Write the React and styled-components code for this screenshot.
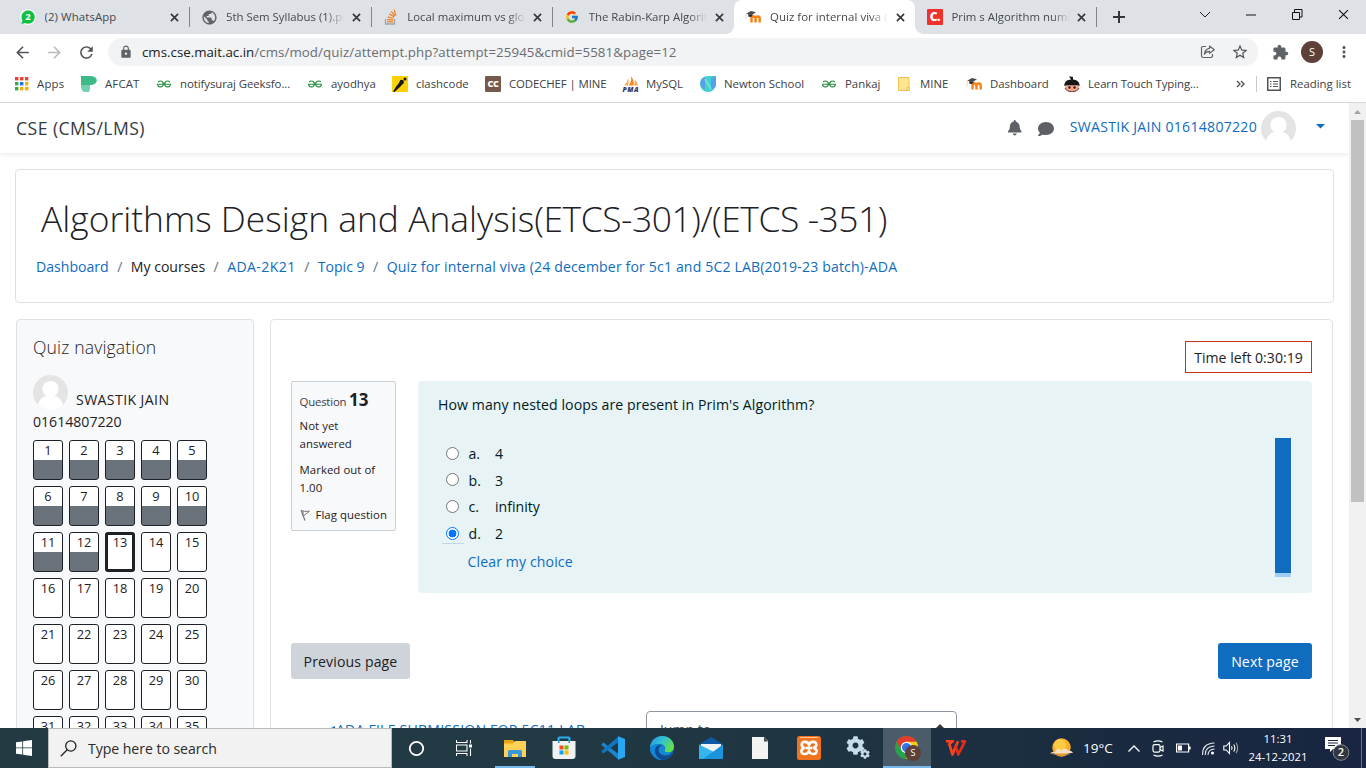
import React from "react";
import styled, { createGlobalStyle, css } from "styled-components";
import { MdArrowBack, MdArrowForward, MdRefresh, MdLock, MdStarBorder, MdExtension, MdMoreVert, MdPublic } from "react-icons/md";
import { FcGoogle } from "react-icons/fc";
import { SiGeeksforgeeks } from "react-icons/si";
import { FaBell, FaComment, FaCog } from "react-icons/fa";

const GlobalStyle = createGlobalStyle`
  * { box-sizing: border-box; }
  body { margin: 0; background: #fff; overflow: hidden; font-family: "Open Sans", "Noto Sans", sans-serif; color: #1d2125; }
  svg { display: block; flex: none; }
`;

const Screen = styled.div`
  width: 1366px;
  height: 768px;
  display: flex;
  flex-direction: column;
  overflow: hidden;
`;

/* ---------- browser chrome ---------- */
const TabStrip = styled.div`
  height: 34px;
  flex: none;
  background: #dee1e6;
  display: flex;
  padding-left: 8px;
`;
const Tab = styled.div`
  position: relative;
  width: 181.4px;
  height: 34px;
  padding: 0 6.5px 0 12px;
  display: flex;
  align-items: center;
  background: ${(p) => (p.$active ? "#fff" : "transparent")};
  border-radius: 8px 8px 0 0;
  ${(p) =>
    p.$active &&
    css`
      &::before, &::after {
        content: "";
        position: absolute;
        bottom: 0;
        width: 8px;
        height: 8px;
      }
      &::before { left: -8px; background: radial-gradient(circle at 0 0, transparent 7.5px, #fff 8px); }
      &::after { right: -8px; background: radial-gradient(circle at 100% 0, transparent 7.5px, #fff 8px); }
    `}
`;
const TabDivider = styled.i`
  position: absolute;
  right: -1px;
  top: 7px;
  width: 1px;
  height: 20px;
  background: #808387;
`;
const Favicon = styled.span`
  width: 16px;
  height: 16px;
  flex: none;
  display: flex;
  align-items: center;
  justify-content: center;
  overflow: visible;
`;
const TabTitle = styled.span`
  flex: 1;
  min-width: 0;
  margin: -1px 4px 0 8.5px;
  font-size: 11.4px;
  line-height: 18px;
  letter-spacing: ${(p) => p.$ls || 0}px;
  white-space: nowrap;
  overflow: hidden;
  color: #45494d;
  mask-image: ${(p) => (p.$fade ? "linear-gradient(90deg, #000 85%, transparent 100%)" : "none")};
`;
const TabClose = styled.span`
  width: 16px;
  display: flex;
  justify-content: center;
`;
const NewTab = styled.div`
  width: 46px;
  display: flex;
  align-items: center;
  justify-content: center;
`;
const WindowControls = styled.div`
  margin-left: auto;
  display: flex;
  height: 29px;
  align-items: center;
`;
const WindowButton = styled.span`
  width: 46px;
  display: flex;
  justify-content: center;
`;
const Toolbar = styled.div`
  height: 36px;
  flex: none;
  display: flex;
  align-items: center;
  padding: 0 0 0 6px;
  color: #5f6368;
`;
const ToolButton = styled.span`
  width: 32px;
  flex: none;
  display: flex;
  justify-content: center;
  color: ${(p) => p.$color || "#505357"};
`;
const Omnibox = styled.div`
  width: 1150px;
  flex: none;
  height: 28px;
  margin: 0 6px;
  padding: 0 2px 0 11px;
  border-radius: 14px;
  background: #f1f3f4;
  display: flex;
  align-items: center;
`;
const Url = styled.span`
  flex: 1;
  margin-left: 9px;
  font-size: 13.3px;
  line-height: 20px;
  letter-spacing: 0.08px;
  color: #6a6e73;
  b { font-weight: 400; color: #202124; letter-spacing: 0; }
`;
const ProfileBadge = styled.span`
  width: ${(p) => p.$size}px;
  height: ${(p) => p.$size}px;
  border-radius: 50%;
  background: #5d4037;
  color: #fff;
  font: ${(p) => p.$font}px/${(p) => p.$size}px "Open Sans", sans-serif;
  text-align: center;
`;
const BookmarkBar = styled.div`
  height: 33px;
  flex: none;
  border-bottom: 1px solid #d5d7da;
  display: flex;
  align-items: center;
  padding: 0 0 5px 13px;
`;
const Bookmark = styled.div`
  width: ${(p) => p.$w}px;
  flex: none;
  display: flex;
  align-items: center;
  gap: 8px;
  font-size: 11.4px;
  line-height: 18px;
  letter-spacing: ${(p) => p.$ls || 0}px;
  white-space: nowrap;
  color: #3c4043;
`;
const CodeBadge = styled.span`
  width: 16px;
  height: 16px;
  flex: none;
  background: ${(p) => p.$bg};
  color: #fff;
  font-weight: 800;
  font-size: ${(p) => p.$size}px;
  line-height: 15px;
  text-align: center;
  letter-spacing: -0.4px;
  border-radius: 1px;
`;
const BarDivider = styled.i`
  width: 1px;
  height: 16px;
  margin: 0 9px 0 11px;
  background: #c8cacd;
`;

/* ---------- page ---------- */
const Viewport = styled.div`
  height: 625px;
  flex: none;
  display: flex;
  overflow: hidden;
`;
const Page = styled.div`
  width: 1349px;
  height: 625px;
  overflow: hidden;
`;
const ScrollTrack = styled.div`
  width: 17px;
  background: #f1f1f1;
  display: flex;
  flex-direction: column;
  align-items: center;
`;
const ScrollArrow = styled.span`
  height: 17px;
  display: flex;
  align-items: center;
`;
const ScrollThumb = styled.div`
  width: 13px;
  height: 382px;
  background: #c1c1c1;
  margin-bottom: auto;
`;
const Navbar = styled.header`
  height: 50px;
  display: flex;
  align-items: center;
  padding: 0 24px 0 16px;
  background: #fff;
  box-shadow: 0 2px 4px rgba(0, 0, 0, 0.08);
`;
const Brand = styled.span`
  font-size: 17.6px;
  line-height: 24px;
  letter-spacing: 0.45px;
  color: #343a40;
`;
const NavTools = styled.div`
  margin-left: auto;
  display: flex;
  align-items: center;
  color: #5d6166;
`;
const NavIcon = styled.span`
  display: flex;
  margin: ${(p) => p.$top || 0}px 0 0 ${(p) => p.$left || 0}px;
`;
const UserLink = styled.a`
  color: #0f6cbf;
  font-size: 14.1px;
  line-height: 22px;
  letter-spacing: 0.26px;
  margin: -3px 4px 0 15.5px;
  white-space: nowrap;
`;
const Card = styled.section`
  border: 1px solid #dee2e6;
  border-radius: 4px;
  background: ${(p) => p.$bg || "#fff"};
`;
const HeaderCard = styled(Card)`
  width: 1319px;
  height: 134px;
  margin: 16px 0 16px 15px;
  padding: 21px 20px;
`;
const Title = styled.h1`
  margin: 0 0 0 5px;
  font-weight: 300;
  font-size: 35.4px;
  line-height: 55px;
  white-space: nowrap;
  span { letter-spacing: -0.44px; }
`;
const Breadcrumb = styled.nav`
  margin-top: 10px;
  display: flex;
  font-size: 14.1px;
  line-height: 22px;
  white-space: nowrap;
  i { font-style: normal; width: 22px; text-align: center; color: #6a737b; }
`;
const Crumb = styled.span`
  color: ${(p) => (p.$plain ? "inherit" : "#0f6cbf")};
  letter-spacing: ${(p) => p.$ls || 0}px;
`;
const Columns = styled.div`
  display: flex;
  align-items: flex-start;
  padding-left: 16px;
  gap: 16px;
`;
const NavCard = styled(Card)`
  width: 238px;
  height: 520px;
  padding: 16px;
`;
const NavHeading = styled.h5`
  margin: 0 0 16px;
  font-weight: 300;
  font-size: 17.6px;
  line-height: 23px;
  letter-spacing: 0.14px;
`;
const UserRow = styled.div`
  display: flex;
  align-items: flex-start;
  gap: 8px;
  height: 36px;
`;
const UserName = styled.div`
  font-size: 14.1px;
  line-height: 22px;
  letter-spacing: ${(p) => p.$ls || 0}px;
  margin-top: ${(p) => p.$top || 0}px;
`;
const QuestionGrid = styled.div`
  margin-top: 7px;
  display: grid;
  grid-template-columns: repeat(5, 30px);
  grid-auto-rows: 40px;
  gap: 6px;
`;
const QuestionButton = styled.a`
  border: ${(p) => (p.$current ? 3 : 1)}px solid #1d2125;
  border-radius: 3px;
  background: ${(p) => (p.$done ? "linear-gradient(#fff 0 19px, #6a737b 19px)" : "#fff")};
  text-align: center;
  font-size: 12.8px;
  line-height: ${(p) => (p.$current ? 14 : 18)}px;
`;
const Main = styled(Card)`
  width: 1063px;
  height: 520px;
  padding: 21px 20px;
  display: flex;
  flex-direction: column;
`;
const Timer = styled.div`
  align-self: flex-end;
  width: 127px;
  height: 32px;
  border: 1px solid #ca3120;
  text-align: center;
  font-size: 14.1px;
  line-height: 31px;
  white-space: nowrap;
`;
const QuestionRow = styled.div`
  display: flex;
  align-items: flex-start;
  justify-content: space-between;
  margin-top: 8px;
`;
const InfoBox = styled.div`
  width: 105px;
  height: 150px;
  border: 1px solid #cad0d7;
  border-radius: 2px;
  background: #f8f9fa;
  padding: 6px 0 0 7.5px;
  font-size: 11.4px;
  line-height: 18px;
  letter-spacing: 0.05px;
  white-space: nowrap;
`;
const InfoTitle = styled.div`
  height: 29px;
  line-height: 24px;
  letter-spacing: -0.2px;
  color: #3b4046;
  b { font-size: 17px; font-weight: 700; letter-spacing: 0; color: #1d2125; }
`;
const InfoText = styled.div`
  margin-bottom: ${(p) => p.$mb}px;
  display: flex;
  align-items: center;
  gap: 5px;
`;
const Formulation = styled.div`
  width: 894px;
  height: 212px;
  border-radius: 4px;
  background: #e7f3f5;
  color: #001a1e;
  padding: 13px 20px;
  font-size: 14.1px;
  display: flex;
  justify-content: space-between;
`;
const Prompt = styled.div`
  line-height: 22px;
  letter-spacing: 0.08px;
  margin-bottom: 25px;
`;
const Answer = styled.div`
  height: 26.6px;
  display: flex;
  align-items: center;
  padding-left: 4px;
  line-height: 22px;
`;
const RadioCell = styled.span`
  width: 22px;
  height: 20px;
  padding: 0 1px 1px 0;
  display: flex;
  align-items: center;
  justify-content: center;
  border-bottom: 1px solid ${(p) => (p.$focus ? "#bcd9ea" : "transparent")};
`;
const Radio = styled.span`
  width: 13px;
  height: 13px;
  border-radius: 50%;
  border: 1px solid ${(p) => (p.$on ? "#0075ff" : "#767676")};
  background: ${(p) => (p.$on ? "radial-gradient(circle, #0075ff 3.6px, #fff 4.2px)" : "#fff")};
`;
const Letter = styled.span`
  width: 31px;
  padding-left: 4.5px;
`;
const ClearLink = styled.a`
  display: block;
  margin: 4px 0 0 29.5px;
  line-height: 22px;
  letter-spacing: 0.12px;
  color: #0f6cbf;
`;
const SideMarker = styled.div`
  width: 16px;
  height: 139px;
  margin: 44px 1px 0 0;
  background: #0f6cbf;
  border-bottom: 4px solid #9fcdf8;
  box-shadow: 1px 0 #fafdfd;
`;
const PagerRow = styled.div`
  margin-top: 50px;
  display: flex;
  justify-content: space-between;
`;
const Button = styled.button`
  width: ${(p) => p.$w}px;
  height: 36px;
  padding: 1px 0 0;
  border: 0;
  border-radius: 3px;
  background: ${(p) => (p.$primary ? "#0f6cbf" : "#ced4da")};
  color: ${(p) => (p.$primary ? "#fff" : "#1d2125")};
  font: 14.1px/35px "Open Sans", sans-serif;
  letter-spacing: 0.12px;
`;
const ActivityNav = styled.div`
  margin-top: 32px;
  display: flex;
  padding-left: 36px;
`;
const ActivityLink = styled.a`
  width: 319px;
  height: 37px;
  color: #0f6cbf;
  font-size: 14.1px;
  line-height: 22px;
  letter-spacing: 0.2px;
  display: flex;
  align-items: center;
  gap: 1px;
  white-space: nowrap;
`;
const JumpSelect = styled.div`
  width: 311px;
  height: 36px;
  border: 1px solid #8f959e;
  border-radius: 4px;
  padding: 0 12px 0 13px;
  display: flex;
  align-items: center;
  justify-content: space-between;
  color: #495057;
  font-size: 14.1px;
`;

/* ---------- taskbar ---------- */
const Taskbar = styled.footer`
  height: 40px;
  flex: none;
  display: flex;
  background: linear-gradient(90deg, #223b43 0%, #213a43 38%, #1f3442 62%, #1a2b40 80%, #192541 100%);
  color: #fff;
`;
const TaskSlot = styled.div`
  width: ${(p) => p.$w || 49}px;
  flex: none;
  height: 40px;
  display: flex;
  align-items: center;
  justify-content: center;
  background: ${(p) => (p.$active ? "#4c5b68" : "transparent")};
  border-bottom: ${(p) => (p.$open ? "2px solid #76b9ed" : "0")};
  padding-top: ${(p) => (p.$open ? 2 : 0)}px;
`;
const InsetSlot = styled(TaskSlot)`
  margin: 0 4px 0 7px;
`;
const SearchBox = styled.div`
  width: 344px;
  flex: none;
  height: 40px;
  border: 1px solid #b9bcbe;
  background: #f2f2f2;
  color: #2b2b2b;
  display: flex;
  align-items: center;
  padding-left: 11px;
  gap: 11px;
  font-size: 14.1px;
  letter-spacing: -0.05px;
`;
const Tray = styled.div`
  margin-left: auto;
  display: flex;
  align-items: center;
  height: 40px;
`;
const Temperature = styled.span`
  width: 45px;
  margin-left: 10px;
  font-size: 13.5px;
`;
const TraySlot = styled.span`
  width: ${(p) => p.$w}px;
  padding-right: ${(p) => p.$pr || 0}px;
  display: flex;
  justify-content: center;
`;
const Clock = styled.div`
  width: 70px;
  margin-left: 7px;
  text-align: center;
  font-size: 11.3px;
  line-height: 18px;
  white-space: nowrap;
`;
const ShowDesktop = styled.i`
  width: 5px;
  height: 40px;
  border-left: 1px solid #6d7587;
`;
const ChromeStack = styled.span`
  position: relative;
  width: 24px;
  height: 24px;
`;
const BadgeHolder = styled.span`
  position: absolute;
  left: 10px;
  top: 9px;
  display: flex;
`;

/* ---------- icons ---------- */
const Cross = ({ size = 9, color = "#34373a", w = 1.8 }) => (
  <svg width={size} height={size} viewBox="0 0 10 10" stroke={color} strokeWidth={w} fill="none"><path d="M1 1l8 8M9 1l-8 8" /></svg>
);
const WhatsAppIcon = () => (
  <svg width="16" height="16" viewBox="0 0 16 16">
    <circle cx="8" cy="8" r="8" fill="#f4faf6" />
    <path d="M1.5 15l.9-3.6A6.6 6.6 0 1 1 5 13.9z" fill="#11bf42" />
    <text x="8" y="11.3" fontSize="9.5" fontWeight="700" fill="#fff" textAnchor="middle">2</text>
  </svg>
);
const StackIcon = () => (
  <svg width="16" height="16" viewBox="0 0 16 16" fill="none">
    <path d="M2.5 10v5h9v-5" stroke="#a0a5aa" strokeWidth="1.3" />
    <path d="M4 12.8h6.2M4.2 10.5l6 .7M4.7 7.8l5.8 1.7M6 4.8l5.2 3.1M8.2 2.4l3.9 4.7M11.2.8l1.600 5.600" stroke="#f48024" strokeWidth="1.3" />
  </svg>
);
const MoodleIcon = () => (
  <svg width="17" height="14" viewBox="0 0 17 14" fill="none">
    <path d="M6.500 12.500V8.600c0-2.800 4-2.800 4 0v3.900V8.600c0-2.800 4.200-2.800 4.200 0v3.900" stroke="#f98012" strokeWidth="2.400" />
    <path d="M1 3.700L6 1l5 1.200-4 2.600z" fill="#4a4a4a" />
    <path d="M3.300 4v2.800l2.800.2 2-2.200z" fill="#2d2d2d" />
    <path d="M1.300 4L.8 9" stroke="#d8c6b8" strokeWidth=".8" />
  </svg>
);
const AppsIcon = () => (
  <svg width="15" height="15" viewBox="0 0 15 15">
    {["#ea4335", "#ea4335", "#ea4335", "#34a853", "#1a73e8", "#fbab04", "#34a853", "#fbab04", "#fbab04"].map((c, i) => (
      <rect key={i} x={1 + (i % 3) * 5} y={1 + Math.floor(i / 3) * 5} width="3.400" height="3.400" fill={c} />
    ))}
  </svg>
);
const AfcatIcon = () => (
  <svg width="16" height="16" viewBox="0 0 16 16">
    <path d="M0 0h9c9 0 9 9 0 9H0z" fill="#3cba87" />
    <path d="M0 9h9v4l-1 3H4c-3 0-4-3-4-7z" fill="#74cfae" />
  </svg>
);
const ClashIcon = () => (
  <svg width="16" height="16" viewBox="0 0 16 16">
    <rect width="16" height="16" fill="#fcd207" />
    <path d="M1 15.500l3.500-5.500L8.500 5l3 2-3.500 4-5.500 5z" fill="#16181a" />
    <circle cx="9.700" cy="6" r="2.200" fill="#16181a" /><circle cx="13" cy="3" r="1.500" fill="#16181a" />
  </svg>
);
const PmaIcon = () => (
  <svg width="17" height="16" viewBox="0 0 17 16">
    <path d="M2 9.600C4 8 5.500 5 5.800 2.500 7 5 6.800 8 5.500 9.600z" fill="#f9a44a" />
    <path d="M6.500 9.600C9 6.500 9.500 3 9 .3c2.500 2.700 3.500 6.200 2.500 9.300z" fill="#f68a1f" />
    <path d="M12 9.600c1-2 1-4 .5-5.800 2 1.600 3.300 3.600 3.300 5.800z" fill="#f9a44a" />
    <text x=".5" y="15.800" fontSize="6.800" fontWeight="800" fontStyle="italic" fill="#35355f" textLength="16">PMA</text>
  </svg>
);
const NewtonIcon = () => (
  <svg width="16" height="16" viewBox="0 0 16 16">
    <path d="M16 0v8a8 8 0 1 1-8-8z" fill="#3fd0d0" />
    <path d="M5 3v10.500A8 8 0 0 1 .5 5.500C1.200 3 3 1.500 5 1zM11 13V2l5-2v8c0 3-2 5-5 5z" fill="#5b9fe8" />
    <path d="M5 3l6 10" stroke="#7ae3d8" strokeWidth="1.500" />
  </svg>
);
const FolderIcon = () => (
  <svg width="12" height="16" viewBox="0 0 12 16">
    <path d="M.5 1.500h10.500v10l.7.500v2.500H.5z" fill="#ffe58f" stroke="#ecc24d" />
    <path d="M9 15v-3.500l2.500-.5" fill="none" stroke="#ecc24d" />
  </svg>
);
const TypingIcon = () => (
  <svg width="16" height="16" viewBox="0 0 16 16">
    <ellipse cx="8" cy="11" rx="7" ry="4.700" fill="#f4a58c" />
    <path d="M.3 10C.3 5 4 3.700 7 3.500L5 .3l4 .6v2.600c3.500.3 6.700 2 6.700 6.500L14 9.200H2.500z" fill="#17171a" />
    <circle cx="5.500" cy="11.500" r="1.200" fill="#222" /><circle cx="10.500" cy="11.500" r="1.200" fill="#222" />
    <path d="M1 12c2 5 12 5 14 0" stroke="#5a2d26" fill="none" />
  </svg>
);
const ShareIcon = () => (
  <svg width="16" height="16" viewBox="0 0 16 16" fill="none" stroke="#5f6368" strokeWidth="1.200">
    <path d="M6 2.500H3.200Q1.500 2.500 1.500 4.200v7.600q0 1.700 1.700 1.700h7.600q1.700 0 1.700-1.700V10" />
    <path d="M9.500 2l4.800 3.700-4.800 3.600V7.400c-2.500 0-4 .7-5.200 2.900.4-3.300 2-5.400 5.200-5.900z" strokeLinejoin="round" />
  </svg>
);
const ListIcon = () => (
  <svg width="14" height="14" viewBox="0 0 14 14" fill="none" stroke="#505357">
    <rect x=".75" y=".75" width="12.500" height="12.500" strokeWidth="1.500" />
    <path d="M3 4.500h1.500M6 4.500h5M3 7h1.500M6 7h5M3 9.500h1.500M6 9.500h5" strokeWidth="1.200" />
  </svg>
);
const PersonAvatar = ({ cut }) => (
  <svg width="35" height="35" viewBox="0 0 35 35">
    <defs><clipPath id={cut ? "avatarNav" : "avatarCard"}><circle cx="17.500" cy="17.500" r="17.500" /></clipPath></defs>
    <g clipPath={`url(#${cut ? "avatarNav" : "avatarCard"})`}>
      <rect width="35" height={cut ? 31 : 35} fill="#e4e4e4" />
      <path d="M17.500 6c5 0 8 3.600 8 8 0 3.200-1.500 5.600-3.800 6.900 4.500 1 7.300 4.600 8.300 9.100l1 6H4l1-6c1-4.500 3.800-8.100 8.300-9.100C11 19.600 9.500 17.200 9.500 14c0-4.400 3-8 8-8z" fill="#fff" />
    </g>
  </svg>
);
const FlagIcon = () => (
  <svg width="11" height="12" viewBox="0 0 11 12" fill="none" stroke="#777" strokeWidth="1">
    <path d="M1 1l4 10.500" strokeWidth="1.200" /><path d="M1.500 1.500Q4 3 9.500 2.200L4 6.500M3 2v5" />
  </svg>
);
const WindowsLogo = () => (
  <svg width="16" height="16" viewBox="0 0 16 16" fill="#fff">
    <path d="M0 2.200L6.300 1.400V7.500H0zM7.100 1.300L16 0v7.500H7.100zM0 8.300h6.300v6.200L0 13.700zM7.100 8.300H16V16l-8.900-1.300z" />
  </svg>
);
const SearchIcon = () => (
  <svg width="17" height="17" viewBox="0 0 17 17" fill="none" stroke="#222" strokeWidth="1.300"><circle cx="10.800" cy="6" r="5.100" /><path d="M7.200 9.800L.8 16.200" /></svg>
);
const TaskViewIcon = () => (
  <svg width="17" height="16" viewBox="0 0 17 16" fill="none" stroke="#fff" strokeWidth="1.100">
    <path d="M.5 0v2.500h10.500V0M.5 16v-2.500h10.500V16M.5 5h10.500v6H.5zM14.500 0v3.500M14.500 8.500V16" /><path d="M13 4.500h3v3h-3z" fill="#fff" stroke="none" />
  </svg>
);
const ExplorerIcon = () => (
  <svg width="22" height="19" viewBox="0 0 22 19">
    <path d="M0 1h9l1.500 2H22v15H0z" fill="#e8a317" /><path d="M0 4.500h9L11 2h11v16H0z" fill="#ffd257" />
    <path d="M4 18v-5.500Q4 11 5.500 11h11q1.500 0 1.500 1.500V18h-4v-3H8v3z" fill="#3a97dc" />
  </svg>
);
const StoreIcon = () => (
  <svg width="24" height="24" viewBox="0 0 24 24">
    <path d="M6.500 6V2.500q0-1 1-1h9q1 0 1 1V6" fill="none" stroke="#25aef0" strokeWidth="2.200" />
    <path d="M.5 5h23v15q0 3-3 3h-17q-3 0-3-3z" fill="#f0f1f3" />
    <path d="M6 3.500h1.500V7H6zM16.500 3.500H18V7h-1.500z" fill="#1595d8" />
    <path d="M7.500 9.500h4v4h-4z" fill="#ef5024" /><path d="M12.500 9.500h4v4h-4z" fill="#7fba00" /><path d="M7.500 14.500h4v4h-4z" fill="#00a4ef" /><path d="M12.500 14.500h4v4h-4z" fill="#ffb900" />
  </svg>
);
const CodeIcon = () => (
  <svg width="24" height="24" viewBox="0 0 24 24">
    <path d="M.5 8.200L2.500 6.500 18 18.500V24L.8 9.300z" fill="#1a86cf" /><path d="M.5 15.800l2 1.700L18 5.500V0L.8 14.700z" fill="#0f75bd" />
    <path d="M17 .3L24 3v18l-7 2.700z" fill="#28a8f2" />
  </svg>
);
const EdgeIcon = () => (
  <svg width="24" height="24" viewBox="0 0 24 24">
    <defs>
      <linearGradient id="edgeTop" x1="0" y1="0" x2="1" y2=".5"><stop offset="0" stopColor="#2196dc" /><stop offset=".5" stopColor="#32bfd5" /><stop offset="1" stopColor="#61e04e" /></linearGradient>
    </defs>
    <circle cx="12" cy="12" r="12" fill="#1269b8" />
    <path d="M0 11.500C.5 5 5.500 0 12 0c7 0 12 5 12 10.500 0 4-3 6-6 6-3.500 0-4-1.300-3.300-2.200C16.500 11.500 13.500 8 9.500 8 5 8 1 10 0 11.500z" fill="url(#edgeTop)" />
    <path d="M8.500 14c0-3 2-4.600 4-4.700-4-2-7.500 1-7.500 5.200C5 19 9 23 13 24c-7 .3-12-4.500-13-11C1 9.500 4.500 7.800 9 8c4 .2 7 3.500 5.700 6.300-.8 1.300 0 2.200 3.300 2.200 2 0 3.500-.5 4.500-1.300-1.500 3-4 4.300-7 4.300-4 0-7-2.500-7-5.500z" fill="#1488d8" />
    <path d="M8.500 14c0 3 3 5.500 7 5.500 3 0 5.500-1.500 7-4 .3.600-2.500 7.500-9.500 8.400C8 23 5 19 5 15c0-2 .8-4 2.500-5 2-1.300 4-.8 5-.7-2 .1-4 1.700-4 4.700z" fill="#124a92" />
  </svg>
);
const MailIcon = () => (
  <svg width="24" height="22" viewBox="0 0 24 22">
    <path d="M0 7.500L12 0l12 7.500L12 13z" fill="#0f5aa8" /><path d="M2 7h20v6l-10 4L2 12z" fill="#f0f3f5" />
    <path d="M0 7.500L15 15l9-7.500V22H0z" fill="#35b5ee" /><path d="M24 7.500V22H4z" fill="#1c94dc" />
  </svg>
);
const FileIcon = () => (
  <svg width="16" height="22" viewBox="0 0 16 22"><path d="M0 0h12l4 4v18H0z" fill="#f3f3f1" /><path d="M12 0l4 4.500h-4z" fill="#444b4e" /></svg>
);
const XamppIcon = () => (
  <svg width="24" height="24" viewBox="0 0 24 24" fill="none">
    <rect width="24" height="24" rx="2.500" fill="#f0741f" /><path d="M3 1.500h18" stroke="#ffc499" />
    <path d="M12 8.800C11 5 5 4.800 4.700 8.500c-.1 2 1 3 2.800 3.500-2.300.5-3.400 2-3 4 .8 3 6.500 2.700 7.500-1 1 3.700 6.700 4 7.500 1 .4-2-.7-3.500-3-4 1.800-.5 2.900-1.500 2.800-3.500C19 4.800 13 5 12 8.800z" stroke="#fff" strokeWidth="2.600" />
    <path d="M8.500 12h7" stroke="#fff" strokeWidth="2.600" />
  </svg>
);
const GearPair = styled.span`
  display: flex;
  width: 24px;
  height: 24px;
  svg:last-child { margin: 13px 0 0 -5px; }
`;
const ChromeIcon = () => (
  <svg width="23" height="23" viewBox="0 0 24 24">
    <circle cx="12" cy="12" r="12" fill="#27a34d" />
    <path d="M12 12L1.600 6A12 12 0 0 1 22.400 6z" fill="#e33b2e" /><path d="M12 12L22.400 6A12 12 0 0 1 12 24z" fill="#fdc918" />
    <path d="M1.600 6l5.500 9 4.900-9z" fill="#e33b2e" /><path d="M12 6h10.400l-5.500 9z" fill="#fdc918" />
    <circle cx="12" cy="12" r="6" fill="#fff" /><circle cx="12" cy="12" r="4.700" fill="#2f74ea" />
  </svg>
);
const WpsIcon = () => (
  <svg width="22" height="16" viewBox="0 0 22 16" fill="none" strokeWidth="2.600" strokeLinejoin="round">
    <path d="M1 1.300h7L4.300 4l3.200 10.500L13 1.300" stroke="#ff4322" />
    <path d="M10.500 5.500l2.700 9L20 1.300h-4" stroke="#ee2a14" />
  </svg>
);
const SunIcon = () => (
  <svg width="23" height="20" viewBox="0 0 23 20">
    <circle cx="11.500" cy="9.500" r="9.200" fill="#fdb12b" /><circle cx="10" cy="7" r="6" fill="#ffcb45" />
    <path d="M0 15.500c2-2 4-1.500 5-1.500 1.500-3.500 5-4 7-1.500 1-2 5-2.500 6 0 2 0 4 .7 5 2.500z" fill="#f3dfc9" />
    <path d="M2 15.500c5 2 14 2 18 0" stroke="#b98555" fill="none" />
  </svg>
);
const MeetIcon = () => (
  <svg width="12" height="17" viewBox="0 0 12 17" fill="none" stroke="#fff" strokeWidth="1.200">
    <path d="M1.500 2Q6-.3 10.500 2M1.500 15Q6 17.300 10.500 15" /><rect x="1" y="4.600" width="7" height="7.500" rx="1.500" /><path d="M8 7.500l3-1.500v5L8 9.500" />
  </svg>
);
const BatteryIcon = () => (
  <svg width="15" height="10" viewBox="0 0 15 10"><path d="M.6 1h12v8H.6z" fill="none" stroke="#fff" strokeWidth="1.200" /><path d="M2 2.500h4v5H2zM13 3.500h1.600v3H13z" fill="#fff" /></svg>
);
const WifiIcon = () => (
  <svg width="13" height="13" viewBox="0 0 13 13" fill="none" stroke="#e6e9ed" strokeWidth="1.100">
    <path d="M.6 13Q0 1.500 12.500 1" /><path d="M3.200 13Q3 4.500 12.500 4" /><path d="M6 13Q6 7.500 12.500 7" /><circle cx="10.500" cy="11" r="1.600" fill="#fff" stroke="none" />
  </svg>
);
const SpeakerIcon = () => (
  <svg width="17" height="14" viewBox="0 0 17 14" fill="none" stroke="#fff" strokeWidth="1.100">
    <path d="M.8 5h2.500L6.500 1.500v11L3.300 9H.8z" /><path d="M8.500 5.200q1.200 1.800 0 3.600" /><path d="M10.700 3.500q2.300 3.500 0 7" /><path d="M13 1.800q3.300 5.200 0 10.400" opacity=".55" />
  </svg>
);
const NotificationIcon = () => (
  <svg width="26" height="26" viewBox="0 0 26 26">
    <path d="M1 2h16v12H9l-3 3v-3H1z" fill="#fff" /><path d="M4 5.500h10M4 8h10M4 10.500h7" stroke="#1a2744" />
    <circle cx="17" cy="17.500" r="7.800" fill="#33363c" stroke="#84888f" />
    <text x="17" y="21.400" textAnchor="middle" fill="#fff" fontSize="11" fontWeight="600">2</text>
  </svg>
);

const tabs = [
  { icon: <WhatsAppIcon />, title: "(2) WhatsApp", divider: true, ls: 0.1 },
  { icon: <MdPublic size={17} color="#5f6368" />, title: "5th Sem Syllabus (1).pdf", divider: true, fade: true },
  { icon: <StackIcon />, title: "Local maximum vs global", divider: true, fade: true },
  { icon: <FcGoogle size={14} />, title: "The Rabin-Karp Algorithm", fade: true },
  { icon: <MoodleIcon />, title: "Quiz for internal viva (24", active: true, fade: true, ls: 0.05 },
  { icon: <CodeBadge $bg="#f0302a" $size={12}>C.</CodeBadge>, title: "Prim s Algorithm number", divider: true, fade: true },
];
const Gfg = () => <SiGeeksforgeeks size={14} color="#2f8d46" />;
const bookmarks = [
  { icon: <AppsIcon />, label: "Apps", w: 68, ls: 0.2 },
  { icon: <AfcatIcon />, label: "AFCAT", w: 75, ls: 0.15 },
  { icon: <Gfg />, label: "notifysuraj Geeksfo...", w: 151, ls: -0.07 },
  { icon: <Gfg />, label: "ayodhya", w: 85 },
  { icon: <ClashIcon />, label: "clashcode", w: 93 },
  { icon: <CodeBadge $bg="#75594a" $size={9}>CC</CodeBadge>, label: "CODECHEF | MINE", w: 137, ls: -0.1 },
  { icon: <PmaIcon />, label: "MySQL", w: 78 },
  { icon: <NewtonIcon />, label: "Newton School", w: 121, ls: 0.02 },
  { icon: <Gfg />, label: "Pankaj", w: 75 },
  { icon: <FolderIcon />, label: "MINE", w: 70 },
  { icon: <MoodleIcon />, label: "Dashboard", w: 98 },
  { icon: <TypingIcon />, label: "Learn Touch Typing...", w: 172, ls: -0.1 },
];
const answers = ["4", "3", "infinity", "2"];

export default function App() {
  return (
    <Screen>
      <GlobalStyle />
      <TabStrip>
        {tabs.map((t) => (
          <Tab key={t.title} $active={t.active}>
            <Favicon>{t.icon}</Favicon>
            <TabTitle $fade={t.fade} $ls={t.ls}>{t.title}</TabTitle>
            <TabClose><Cross /></TabClose>
            {t.divider && <TabDivider />}
          </Tab>
        ))}
        <NewTab><svg width="12" height="12" viewBox="0 0 12 12" stroke="#34373a" strokeWidth="2"><path d="M6 0v12M0 6h12" /></svg></NewTab>
        <WindowControls>
          <WindowButton><svg width="12" height="7" viewBox="0 0 12 7" fill="none" stroke="#222"><path d="M1 1l5 5 5-5" /></svg></WindowButton>
          <WindowButton><svg width="10" height="2" viewBox="0 0 10 2"><path d="M0 .5h10v1H0z" fill="#111" /></svg></WindowButton>
          <WindowButton><svg width="11" height="11" viewBox="0 0 11 11" fill="none" stroke="#111"><path d="M.5 3.500h7v7h-7zM2.500 3V.5h7.500V8H8" /></svg></WindowButton>
          <WindowButton><Cross size={11} w={1} color="#111" /></WindowButton>
        </WindowControls>
      </TabStrip>
      <Toolbar>
        <ToolButton><MdArrowBack size={19} /></ToolButton>
        <ToolButton $color="#b8babd"><MdArrowForward size={19} /></ToolButton>
        <ToolButton><MdRefresh size={19} /></ToolButton>
        <Omnibox>
          <MdLock size={14} />
          <Url><b>cms.cse.mait.ac.in</b>/cms/mod/quiz/attempt.php?attempt=25945&amp;cmid=5581&amp;page=12</Url>
          <ToolButton><ShareIcon /></ToolButton>
          <ToolButton><MdStarBorder size={18} /></ToolButton>
        </Omnibox>
        <ToolButton $color="#5f6368"><MdExtension size={17} /></ToolButton>
        <ToolButton><ProfileBadge $size={22} $font={11}>S</ProfileBadge></ToolButton>
        <ToolButton><MdMoreVert size={18} /></ToolButton>
      </Toolbar>
      <BookmarkBar>
        {bookmarks.map((b, i) => (
          <Bookmark key={i} $w={b.w} $ls={b.ls}><Favicon>{b.icon}</Favicon>{b.label}</Bookmark>
        ))}
        <svg width="9" height="8" viewBox="0 0 9 8" fill="none" stroke="#505357" strokeWidth="1.400"><path d="M1 1l3 3-3 3M5 1l3 3-3 3" /></svg>
        <BarDivider />
        <Bookmark $w={100}><Favicon><ListIcon /></Favicon>Reading list</Bookmark>
      </BookmarkBar>

      <Viewport>
        <Page>
          <Navbar>
            <Brand>CSE (CMS/LMS)</Brand>
            <NavTools>
              <NavIcon><FaBell size={15.5} /></NavIcon>
              <NavIcon $left={16} $top={1}><FaComment size={16} /></NavIcon>
              <UserLink>SWASTIK JAIN 01614807220</UserLink>
              <PersonAvatar cut />
              <NavIcon $left={20} $top={-3}><svg width="9" height="5" viewBox="0 0 9 5"><path d="M0 0h9L4.500 4.500z" fill="#0f6cbf" /></svg></NavIcon>
            </NavTools>
          </Navbar>
          <HeaderCard>
            <Title>Algorithms Design and Analysis<span>(ETCS-301)/(ETCS -351)</span></Title>
            <Breadcrumb>
              <Crumb>Dashboard</Crumb><i>/</i>
              <Crumb $plain>My courses</Crumb><i>/</i>
              <Crumb $ls={0.4}>ADA-2K21</Crumb><i>/</i>
              <Crumb>Topic 9</Crumb><i>/</i>
              <Crumb $ls={0.14}>Quiz for internal viva (24 december for 5c1 and 5C2 LAB(2019-23 batch)-ADA</Crumb>
            </Breadcrumb>
          </HeaderCard>
          <Columns>
            <NavCard $bg="#f8f9fa">
              <NavHeading>Quiz navigation</NavHeading>
              <UserRow><PersonAvatar /><UserName $top={14} $ls={0.4}>SWASTIK JAIN</UserName></UserRow>
              <UserName>01614807220</UserName>
              <QuestionGrid>
                {Array.from({ length: 35 }, (_, i) => (
                  <QuestionButton key={i} $done={i < 12} $current={i === 12}>{i + 1}</QuestionButton>
                ))}
              </QuestionGrid>
            </NavCard>
            <Main>
              <Timer>Time left 0:30:19</Timer>
              <QuestionRow>
                <InfoBox>
                  <InfoTitle>Question <b>13</b></InfoTitle>
                  <InfoText $mb={8}>Not yet<br />answered</InfoText>
                  <InfoText $mb={9}>Marked out of<br />1.00</InfoText>
                  <InfoText $mb={0}><FlagIcon />Flag question</InfoText>
                </InfoBox>
                <Formulation>
                  <div>
                    <Prompt>How many nested loops are present in Prim's Algorithm?</Prompt>
                    {answers.map((a, i) => (
                      <Answer key={a}>
                        <RadioCell $focus={i === 3}><Radio $on={i === 3} /></RadioCell>
                        <Letter>{"abcd"[i]}.</Letter>
                        <span>{a}</span>
                      </Answer>
                    ))}
                    <ClearLink>Clear my choice</ClearLink>
                  </div>
                  <SideMarker />
                </Formulation>
              </QuestionRow>
              <PagerRow>
                <Button $w={119}>Previous page</Button>
                <Button $w={94} $primary>Next page</Button>
              </PagerRow>
              <ActivityNav>
                <ActivityLink><svg width="8" height="8" viewBox="0 0 8 8"><path d="M8 0v8L0 4z" fill="#0f6cbf" /></svg>ADA FILE SUBMISSION FOR 5C11 LAB</ActivityLink>
                <JumpSelect>Jump to...<svg width="8" height="10" viewBox="0 0 8 10" fill="#343a40"><path d="M4 0l4 4H0zM0 6h8l-4 4z" /></svg></JumpSelect>
              </ActivityNav>
            </Main>
          </Columns>
        </Page>
        <ScrollTrack>
          <ScrollArrow><svg width="7" height="4" viewBox="0 0 7 4"><path d="M0 4l3.500-4L7 4z" fill="#a3a3a3" /></svg></ScrollArrow>
          <ScrollThumb />
          <ScrollArrow><svg width="7" height="4" viewBox="0 0 7 4"><path d="M0 0h7L3.500 4z" fill="#505050" /></svg></ScrollArrow>
        </ScrollTrack>
      </Viewport>

      <Taskbar>
        <TaskSlot $w={48}><WindowsLogo /></TaskSlot>
        <SearchBox><SearchIcon />Type here to search</SearchBox>
        <TaskSlot $w={48}><svg width="17" height="17" viewBox="0 0 17 17"><circle cx="8.500" cy="8.500" r="6.700" fill="none" stroke="#fff" strokeWidth="1.800" /></svg></TaskSlot>
        <TaskSlot $w={48}><TaskViewIcon /></TaskSlot>
        <InsetSlot $w={40} $open><ExplorerIcon /></InsetSlot>
        <TaskSlot><StoreIcon /></TaskSlot>
        <TaskSlot><CodeIcon /></TaskSlot>
        <TaskSlot><EdgeIcon /></TaskSlot>
        <TaskSlot><MailIcon /></TaskSlot>
        <TaskSlot><FileIcon /></TaskSlot>
        <TaskSlot><XamppIcon /></TaskSlot>
        <TaskSlot $w={50}><GearPair><FaCog size={19} color="#c6dcec" /><FaCog size={10} color="#c6dcec" /></GearPair></TaskSlot>
        <TaskSlot $w={48} $active $open>
          <ChromeStack><ChromeIcon /><BadgeHolder><ProfileBadge $size={16} $font={9}>S</ProfileBadge></BadgeHolder></ChromeStack>
        </TaskSlot>
        <TaskSlot><WpsIcon /></TaskSlot>
        <Tray>
          <SunIcon />
          <Temperature>19°C</Temperature>
          <svg width="12" height="7" viewBox="0 0 12 7" fill="none" stroke="#fff" strokeWidth="1.300"><path d="M.5 6.500L6 1l5.500 5.500" /></svg>
          <TraySlot $w={36}><MeetIcon /></TraySlot>
          <TraySlot $w={14}><BatteryIcon /></TraySlot>
          <TraySlot $w={36}><WifiIcon /></TraySlot>
          <TraySlot $w={10}><SpeakerIcon /></TraySlot>
          <Clock>11:31<br />24-12-2021</Clock>
          <TraySlot $w={48}><NotificationIcon /></TraySlot>
          <ShowDesktop />
        </Tray>
      </Taskbar>
    </Screen>
  );
}
